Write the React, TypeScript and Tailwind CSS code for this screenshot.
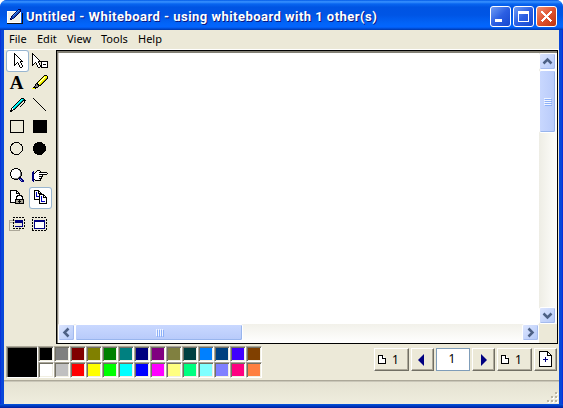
import type { ReactNode } from "react";

const palette = [
  ["#000000", "#808080", "#800000", "#808000", "#008000", "#008080", "#000080", "#800080", "#808040", "#004040", "#0080ff", "#004080", "#4000ff", "#804000"],
  ["#ffffff", "#c0c0c0", "#ff0000", "#ffff00", "#00ff00", "#00ffff", "#0000ff", "#ff00ff", "#ffff80", "#00ff80", "#80ffff", "#8080ff", "#ff0080", "#ff8040"],
];

const inks: Record<string, string> = { k: "#000", w: "#fff", b: "#000080", g: "#808080", y: "#ffff00", o: "#808000", c: "#00ffff", t: "#008080", l: "#8ca4e0", s: "#aca899" };

// Small bitmaps: one letter per pixel, a dot is transparent.
const cursor = ["k", "kk", "kwk", "kwwk", "kwwwk", "kwwwwk", "kwwwwwk", "kwwwwwwk", "kwwwwwkkk", "kwwkwwk", "kwk.kwwk", "kk..kwwk", "k....kwwk", ".....kwwk", "......kk"];
const hand = [".....kkk", ".b..kwwwk", "bb.kwwwkkkkkkkk", "bbkwwwwwwwwwwwwk", "bbwwwwwkkkkkkkk", "bbwwwwwwwwk", "bbwwwwwkkkk", "bbwwwwwwwk", "bbwwwwwkkk", "bbkwwwwwk", "bb.kkkkkk", ".b"];
const lens = ["....kkkk", "..kkwwwwkk", ".kwwwwwwwgk", ".kwwwwwwwwk", "kwwwwwwwwwgk", "kwwwwwwwwwgk", "kwwwwwwwwwgk", "kwwwwwwwwwgk", ".kwwwwwwwgk", ".kwwwwwwgkk", "..kkggggkbbb", "....kkkk.blbb", "..........blbb", "...........bbb"];
const marker = ["............kkk", "...........kyyyk", "..........kywyyk", ".........kywyyok", "........kywyyok", ".......kywyyok", "......kywyyok", ".....kywyyok", "....kkwyyok", "...kgkkyok", "...kggkkk", "..kgggk", ".kkkkk", "yyyk"];
const pen = ["...........kkk", "..........kcctk", ".........kcctkkk", "........kcctk.k", ".......kcctk..k", "......kcctk..k", ".....kcctk..k", "....kcctk..k", "...kcctk..k", "..kcctk", ".kwctk", ".kwkk", "kkk", "kk"];

function Pixels({ rows, x, y }: { rows: string[]; x: number; y: number }) {
  return (
    <g stroke="none">
      {rows.flatMap((row, j) => row.split("").map((c, i) => (c === "." ? null : <rect key={`${i}-${j}`} x={x + i} y={y + j} width="1" height="1" fill={inks[c]} />)))}
    </g>
  );
}

function Icon({ children, w = 23, h = 22 }: { children: ReactNode; w?: number; h?: number }) {
  return (
    <svg width={w} height={h} viewBox={`0 0 ${w} ${h}`} fill="none" stroke="#000" shapeRendering="crispEdges" className="block shrink-0">
      {children}
    </svg>
  );
}

function Tool({ children, selected = false }: { children: ReactNode; selected?: boolean }) {
  return (
    <div className={`h-[22px] w-[23px] ${selected ? "rounded-[3px] bg-white shadow-[inset_0_0_0_1px_#98b5cf]" : ""}`}>
      <Icon>{children}</Icon>
    </div>
  );
}

function Toolbox() {
  return (
    <div className="flex w-[50px] shrink-0 flex-col pl-[2px]">
      <div className="grid grid-cols-[23px_23px]">
        <Tool selected><Pixels rows={cursor} x={8} y={3} /></Tool>
        <Tool>
          <Pixels rows={cursor} x={3} y={3} />
          <path d="M12.500 11.500h6v6h-6z" fill="#fff" />
          <path d="M14 14.500h3" />
        </Tool>
        <Tool>
          <text x="3.800" y="17" stroke="none" fill="#000" className="font-['Liberation_Serif',serif] text-[19px] font-bold">A</text>
        </Tool>
        <Tool><Pixels rows={marker} x={3} y={3} /></Tool>
        <Tool><Pixels rows={pen} x={4} y={4} /></Tool>
        <Tool><path d="M4 4l13.500 13.500" /></Tool>
        <Tool><path d="M4.500 4.500h13v12h-13z" /></Tool>
        <Tool><path d="M4.500 4.500h13v12h-13z" fill="#000" /></Tool>
        <Tool><circle cx="10.500" cy="10.500" r="6" /></Tool>
        <Tool><circle cx="10.500" cy="10.500" r="6" fill="#000" /></Tool>
      </div>
      <div className="mt-[5px] grid grid-cols-[23px_23px]">
        <Tool><Pixels rows={lens} x={4} y={3} /></Tool>
        <Tool><Pixels rows={hand} x={3} y={5} /></Tool>
        <Tool>
          <path d="M4.500 3.500h6l3 3v9h-9z" fill="#fff" />
          <path d="M10.500 3.500v3h3" />
          <path d="M10.500 12.500v-3h1v-1h4v1h1v3z" fill="#fff" />
          <path d="M9.500 12.500h8v4h-8z" fill="#aca899" />
          <path d="M12 14.500h3M13.500 13v3" />
        </Tool>
        <Tool selected>
          <path d="M5.500 3.500h4l3 3v6h-7z" fill="#fff" />
          <path d="M9.500 3.500v3h3" />
          <path d="M7.500 5v4.500h2.500" stroke="#0000c0" />
          <path d="M10.500 7.500h4l3 3v6h-7z" fill="#fff" />
          <path d="M14.500 7.500v3h3" />
          <path d="M12.500 9v5.500h3" stroke="#0000c0" />
        </Tool>
      </div>
      <div className="mt-1 grid grid-cols-[23px_23px]">
        <Tool>
          <path d="M3.500 7.500h10v10h-10zM3 9.500h6" stroke="#aca899" />
          <path d="M9 7h8v7h-8z" fill="#ece9d8" stroke="none" />
          <path d="M9 8.500h8" stroke="#000080" strokeWidth="3" />
          <path d="M9 13.500h7.500v-4" stroke="#000080" />
          <path d="M7 4.500h12M7 15.500h12M7.500 4v12M18.500 4v12" stroke="#ece9d8" />
          <path d="M7 4.500h12M7 15.500h12M7.500 6v9M18.500 6v9" strokeDasharray="2 1" />
        </Tool>
        <Tool>
          <path d="M5.500 7.500h10v8h-10z" fill="#fff" stroke="#000080" />
          <path d="M5 8.500h11" stroke="#000080" />
          <path d="M3 4.500h15M3 17.500h15M3.500 6v11M17.500 6v11" strokeDasharray="2 1" />
        </Tool>
      </div>
    </div>
  );
}

function ArrowButton({ path }: { path: string }) {
  return (
    <div className="h-[17px] w-[17px] shrink-0 rounded-[2px] border border-white bg-linear-to-br from-[#dce5fe] to-[#b3c8f8] shadow-[inset_-1px_-1px_0_#a5bbee]">
      <svg width="15" height="15" fill="none" stroke="#4d6185" strokeWidth="2.500"><path d={path} /></svg>
    </div>
  );
}

function Chrome({ kind }: { kind: "min" | "max" | "close" }) {
  return (
    <div className={`h-[21px] w-[21px] rounded-[3px] border border-white ${kind === "close" ? "bg-linear-to-br from-[#ef8d70] via-[#df522f] to-[#bd3209]" : "bg-linear-to-br from-[#729cf3] via-[#2c5fe3] to-[#1548cf]"}`}>
      <svg width="19" height="19" fill="none" stroke="white" shapeRendering="crispEdges">
        {kind === "min" && <path d="M4 13.500h7" strokeWidth="3" />}
        {kind === "max" && <><path d="M4.500 4.500h10v10h-10z" /><path d="M4 5.500h11" strokeWidth="3" /></>}
        {kind === "close" && <path d="M4.500 4.500l10 10M14.500 4.500l-10 10" strokeWidth="2.300" />}
      </svg>
    </div>
  );
}

function Page() {
  return (
    <svg width="9" height="10" fill="white" stroke="black" shapeRendering="crispEdges">
      <path d="M.5 .5h4l3 3v5h-7z" /><path d="M4.500 .5v3h3" />
    </svg>
  );
}

const raised = "flex h-[23px] items-center border border-t-white border-l-white border-r-[#716f64] border-b-[#716f64] shadow-[inset_-1px_-1px_0_#aca899]";

export default function App() {
  return (
    <div className="flex h-[408px] w-[563px] flex-col overflow-hidden rounded-t-[7px] bg-[#0847d9] font-['Noto_Sans',sans-serif] text-[11px] text-black">
      <header className="flex h-[30px] shrink-0 items-center bg-[linear-gradient(180deg,#0058e6_0,#3a93ff_6%,#0865f0_13%,#0054e3_24%,#0055e5_50%,#0264f8_78%,#0265ff_90%,#0046c9_97%,#0037a8_100%)] pt-[3px] pr-[6px] pl-[6px]">
        <svg width="17" height="17" fill="none" shapeRendering="crispEdges">
          <path d="M1.500 3.500h13v11h-13z" fill="#f1f1e9" stroke="#fff" />
          <path d="M1 15.500h15v-11" stroke="#111" />
          <path d="M4.500 11.500l1-3 7-7h2v2l-7 7z" fill="#1648b6" stroke="#000050" />
          <path d="M7 8l6-6" stroke="#4395f2" />
        </svg>
        <h1 className="ml-[3px] w-[370px] pt-px whitespace-nowrap font-[Roboto,sans-serif] text-[13px] leading-4 font-bold tracking-[0.465px] text-white [text-shadow:1px_1px_#0a1883]">Untitled - Whiteboard - using whiteboard with 1 other(s)</h1>
        <div className="ml-auto flex gap-[2px]"><Chrome kind="min" /><Chrome kind="max" /><Chrome kind="close" /></div>
      </header>

      <div className="flex h-[374px] flex-col border-x-1 border-[#0831d9] px-[3px]">
        <div className="flex h-[374px] flex-col bg-[#ece9d8]">
          <nav className="flex h-5 shrink-0 items-center border-b border-white pb-[2px] pl-[5px] leading-4">
            <span className="w-[28px]">File</span><span className="w-[30px]">Edit</span><span className="w-[34px]">View</span><span className="w-[37px]">Tools</span><span>Help</span>
          </nav>
          <main className="flex h-[294px] shrink-0">
            <Toolbox />
            <div className="ml-[2px] flex h-[294px] w-[502px] border border-black bg-white">
              <div className="flex w-[500px] flex-col border-t-2 border-l border-[#827f74]">
                <div className="flex h-[271px] border-l border-[#d4d0c8]">
                  <div className="flex-1 bg-white" />
                  <div className="flex w-[18px] flex-col items-center bg-linear-to-r from-[#eeede5] to-[#fefefb] pr-px">
                    <ArrowButton path="M3.500 9.500l4-4 4 4" />
                    <div className="flex h-[63px] w-[17px] flex-col items-center justify-center gap-px rounded-[2px] border border-white bg-linear-to-r from-[#c8d7fe] to-[#b9cbfa] shadow-[inset_-1px_-1px_0_#98b5ed]">
                      {[0, 1, 2, 3].map((n) => <i key={n} className="block h-px w-[7px] bg-[#f1f5ff] shadow-[1px_1px_0_#8cb0f8]" />)}
                    </div>
                    <div className="mt-auto"><ArrowButton path="M3.500 5.500l4 4 4-4" /></div>
                  </div>
                </div>
                <div className="flex h-[19px] bg-linear-to-b from-[#f2f1ea] to-white">
                  <ArrowButton path="M9.500 3.500l-4 4 4 4" />
                  <div className="flex h-[17px] w-[168px] items-center justify-center gap-px rounded-[2px] border border-white bg-linear-to-b from-[#c9d8ff] to-[#b7cafa] shadow-[inset_-1px_-1px_0_#98b5ed]">
                    {[0, 1, 2, 3].map((n) => <i key={n} className="block h-[7px] w-px bg-[#f1f5ff] shadow-[1px_1px_0_#8cb0f8]" />)}
                  </div>
                  <div className="ml-auto"><ArrowButton path="M5.500 3.500l4 4-4 4" /></div>
                  <div className="w-[18px] bg-[#ece9d8]" />
                </div>
              </div>
            </div>
          </main>

          <section className="flex h-[37px] shrink-0 border-b border-[#aca899] pt-[2px] pl-[2px] shadow-[0_1px_0_#c9c6b8]">
            <div className="h-[32px] w-[32px] border border-t-[#aca899] border-l-[#aca899] border-r-white border-b-white bg-black shadow-[inset_1px_1px_0_#716f64]" />
            <div className="flex flex-col">
              {palette.map((row, r) => <div key={r} className="flex">{row.map((color) => <div key={color} className="h-4 w-4 border border-t-[#aca899] border-l-[#aca899] border-r-white border-b-white shadow-[inset_1px_1px_0_#716f64,inset_-1px_-1px_0_#f1efe2]" style={{ backgroundColor: color }} />)}</div>)}
            </div>
            <div className="mt-[2px] ml-auto flex gap-[2px] pr-[2px] text-[12px]">
              <div className={`${raised} w-[35px] gap-[5px] pl-[3px]`}><Page />1</div>
              <div className={`${raised} w-[23px] pl-[6px]`}><svg width="7" height="12"><path d="M6 0v12L0 6z" fill="#000080" /></svg></div>
              <div className="flex h-[23px] w-[34px] items-center justify-center border border-[#7f9db9] bg-white pr-[2px] pb-[2px]">1</div>
              <div className={`${raised} w-[23px] pl-2`}><svg width="7" height="12"><path d="M0 0v12l6-6z" fill="#000080" /></svg></div>
              <div className={`${raised} w-[35px] gap-[5px] pl-[3px]`}><Page />1</div>
              <div className={`${raised} w-[23px] pl-1`}><Icon w={14} h={17}><path d="M.5 .5h8l4 4v11h-12z" fill="#fff" /><path d="M8.500 .5v4h4" /><path d="M4 8.500h5M6.500 6v5" stroke="#000080" /></Icon></div>
            </div>
          </section>
          <footer className="mt-px flex h-[22px] shrink-0 items-end justify-end bg-linear-to-b from-[#e5e2d2] to-[#efedde] pr-px pb-[1px]">
            <svg width="12" height="12" fill="#b8b4a2" shapeRendering="crispEdges">
              {[[9, 1], [5, 5], [9, 5], [1, 9], [5, 9], [9, 9]].map(([x, y]) => <g key={`${x}-${y}`}><rect x={x + 1} y={y + 1} width="2" height="2" fill="#fff" /><rect x={x} y={y} width="2" height="2" /></g>)}
            </svg>
          </footer>
        </div>
      </div>
      <div className="h-1 bg-linear-to-b from-[#0855dd] to-[#001ca0]" />
    </div>
  );
}
